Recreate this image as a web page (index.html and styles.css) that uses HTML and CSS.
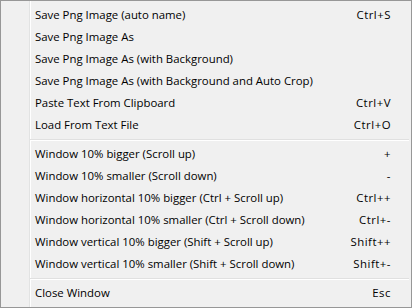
FILE: index.html
```html
<!DOCTYPE html>
<html lang="en">
<head>
    <meta charset="UTF-8">
    <meta name="viewport" content="width=device-width, initial-scale=1.0">
    <title>Context Menu</title>
    <link rel="stylesheet" href="styles.css">
</head>
<body>
    <div class="menu">
        <div class="menu-item"><span>Save Png Image (auto name)</span><span class="shortcut">Ctrl+S</span></div>
        <div class="menu-item"><span>Save Png Image As</span></div>
        <div class="menu-item"><span>Save Png Image As (with Background)</span></div>
        <div class="menu-item"><span>Save Png Image As (with Background and Auto Crop)</span></div>
        <div class="menu-item"><span>Paste Text From Clipboard</span><span class="shortcut">Ctrl+V</span></div>
        <div class="menu-item"><span>Load From Text File</span><span class="shortcut">Ctrl+O</span></div>
        <div class="separator"></div>
        <div class="menu-item"><span>Window 10% bigger (Scroll up)</span><span class="shortcut">+</span></div>
        <div class="menu-item"><span>Window 10% smaller (Scroll down)</span><span class="shortcut">-</span></div>
        <div class="menu-item"><span>Window horizontal 10% bigger (Ctrl + Scroll up)</span><span class="shortcut">Ctrl++</span></div>
        <div class="menu-item"><span>Window horizontal 10% smaller (Ctrl + Scroll down)</span><span class="shortcut">Ctrl+-</span></div>
        <div class="menu-item"><span>Window vertical 10% bigger (Shift + Scroll up)</span><span class="shortcut">Shift++</span></div>
        <div class="menu-item"><span>Window vertical 10% smaller (Shift + Scroll down)</span><span class="shortcut">Shift+-</span></div>
        <div class="separator"></div>
        <div class="menu-item"><span>Close Window</span><span class="shortcut">Esc</span></div>
    </div>
</body>
</html>
```

FILE: styles.css
```css
body {
    margin: 0;
    font-family: "Open Sans", "Noto Sans", sans-serif;
    font-size: 11.4px;
    color: #000;
}
.menu {
    width: 412px;
    height: 308px;
    box-sizing: border-box;
    border: 1px solid #979797;
    padding: 2px 0 0;
    background: linear-gradient(to right, #f0f0f0 28px, #e2e3e3 28px 29px, #fff 29px 30px, #f0f0f0 30px);
}
.menu-item {
    display: flex;
    justify-content: space-between;
    align-items: center;
    height: 22px;
    padding: 0 20px 0 34px;
}
.shortcut {
    letter-spacing: 0.5px;
}
.separator {
    height: 7px;
    margin: 0 2px 0 29px;
    background: linear-gradient(to bottom, transparent 4px, #e0e0e0 4px 5px, #fff 5px 6px, transparent 6px);
}
```
